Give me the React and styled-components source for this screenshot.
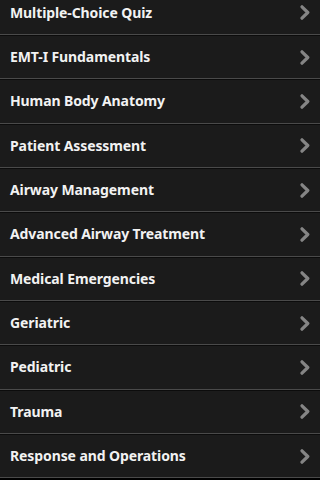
import React from 'react';
import styled, { createGlobalStyle } from 'styled-components';

const GlobalStyle = createGlobalStyle`
    html, body {
        margin: 0;
        padding: 0;
        background: #000;
        overflow: hidden;
    }
`;

const topics = [
    "Multiple-Choice Quiz",
    "EMT-I Fundamentals",
    "Human Body Anatomy",
    "Patient Assessment",
    "Airway Management",
    "Advanced Airway Treatment",
    "Medical Emergencies",
    "Geriatric",
    "Pediatric",
    "Trauma",
    "Response and Operations",
];

function Chevron() {
    return (
        <svg width="10" height="15" viewBox="0 0 10 15">
            <path d="M2 1.8 L7.8 7.5 L2 13.2" fill="none" stroke="#858585" strokeWidth="3.2" strokeLinejoin="round" strokeLinecap="round" />
        </svg>
    );
}

export default function App() {
    return (
        <>
            <GlobalStyle />
            <Screen>
                <List>
                    {topics.map((t) => (
                        <Row key={t}>
                            <Label>{t}</Label>
                            <Chevron />
                        </Row>
                    ))}
                </List>
            </Screen>
        </>
    );
}

const Screen = styled.div`
    width: 320px;
    height: 480px;
    overflow: hidden;
    background: #000;
`;

const List = styled.div`
    margin-top: -9.33px;
    display: flex;
    flex-direction: column;
`;

const Row = styled.div`
    height: 42.33px;
    display: flex;
    align-items: center;
    justify-content: space-between;
    padding: 0 10px 0 10px;
    background: #1b1b1b;
    border-bottom: 1px solid #4a4a4a;
    border-top: 1px solid #0c0c0c;
    svg {
        flex-shrink: 0;
    }
`;

const Label = styled.span`
    font-family: "Noto Sans", "DejaVu Sans", sans-serif;
    font-weight: 700;
    font-size: 14px;
    letter-spacing: -0.1px;
    color: #f2f2f2;
    white-space: nowrap;
    margin-top: -1px;
`;
